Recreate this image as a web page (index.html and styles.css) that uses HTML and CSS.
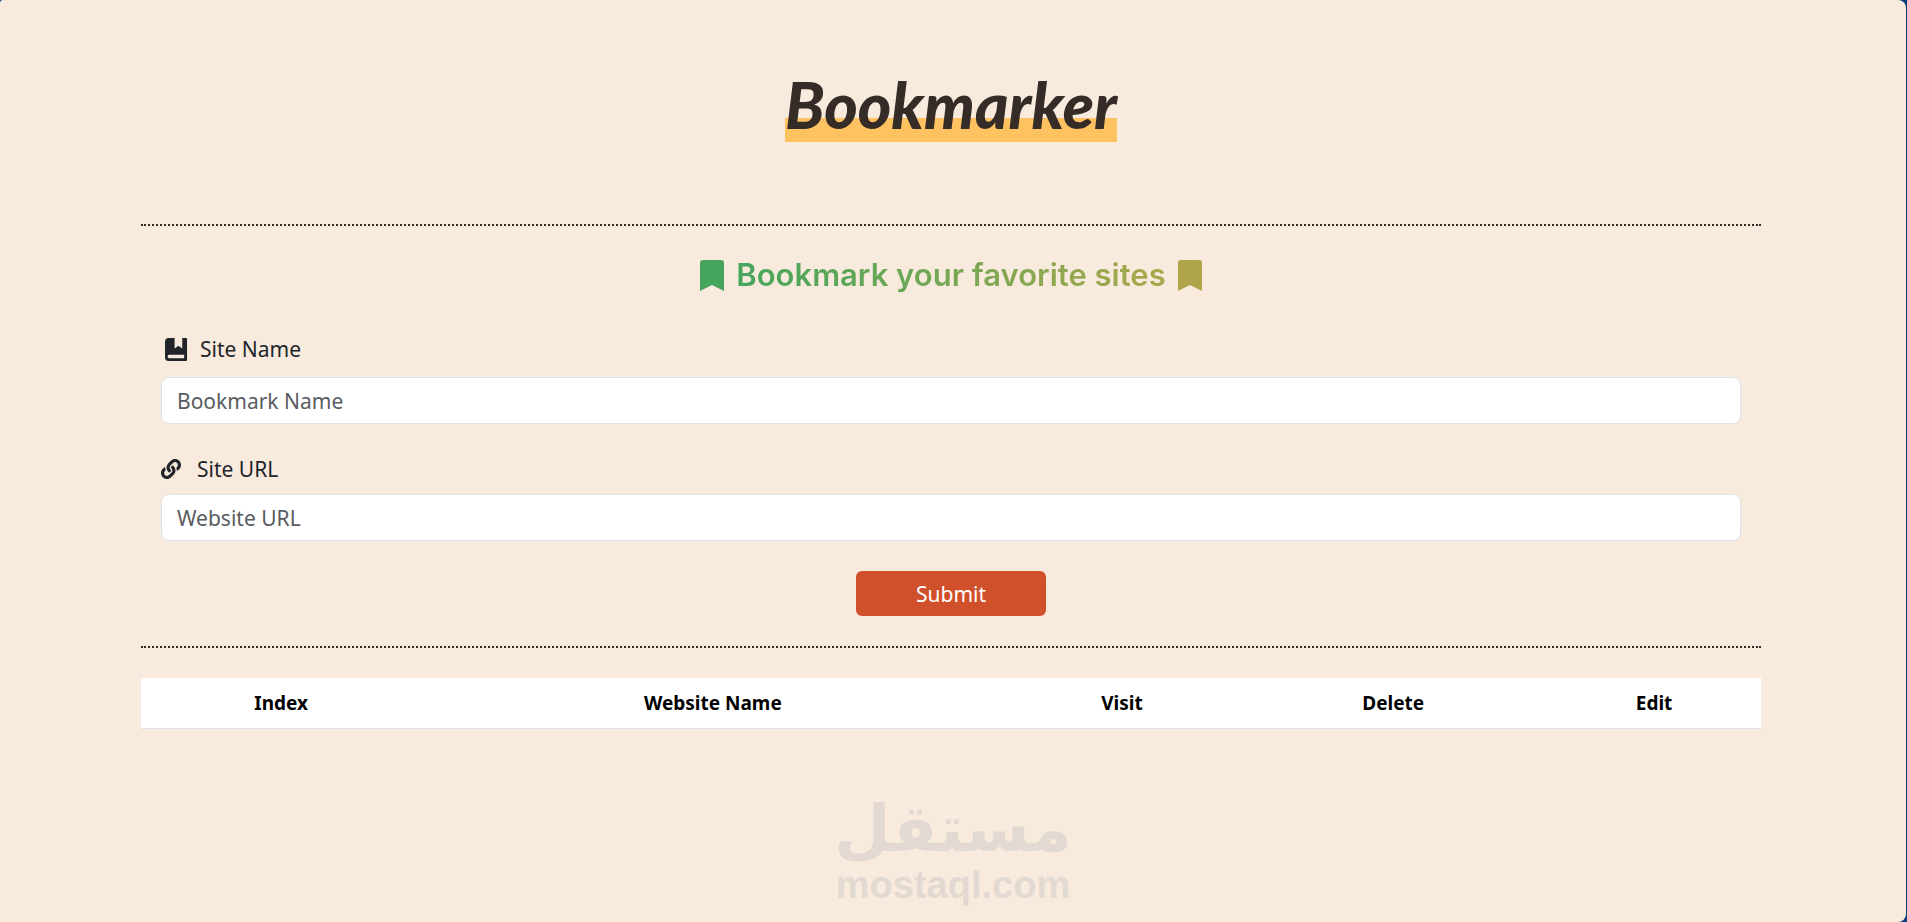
FILE: index.html
```html
<!DOCTYPE html>
<html lang="en">
<head>
<meta charset="utf-8">
<title>Bookmarker</title>
<link rel="stylesheet" href="styles.css">
</head>
<body>
<div class="page">
  <header class="header">
    <h1 class="brand">Bookmarker</h1>
  </header>
  <main class="content">
    <section class="entry">
      <div class="heading">
        <svg class="flag flag-start" viewBox="0 0 24 31" aria-hidden="true"><path d="M3 0h18a3 3 0 0 1 3 3v28l-12-6L0 31V3a3 3 0 0 1 3-3z"/></svg>
        <h2 class="heading-text">Bookmark your favorite sites</h2>
        <svg class="flag flag-end" viewBox="0 0 24 31" aria-hidden="true"><path d="M3 0h18a3 3 0 0 1 3 3v28l-12-6L0 31V3a3 3 0 0 1 3-3z"/></svg>
      </div>
      <form class="form">
        <div class="field field-name">
          <label class="label" for="site-name">
            <svg class="icon-book" viewBox="0 0 24 26" aria-hidden="true"><path fill-rule="evenodd" d="M4 1h6v11l4-3 4 3V1h4a1 1 0 0 1 1 1v22a1 1 0 0 1-1 1H4a4 4 0 0 1-4-4V5a4 4 0 0 1 4-4zM4.500 18.500a1.700 1.700 0 0 0 0 3.500H20v-3.500z"/></svg>
            Site Name
          </label>
          <input class="input" id="site-name" type="text" placeholder="Bookmark Name">
        </div>
        <div class="field">
          <label class="label label-url" for="site-url">
            <svg class="icon-link" viewBox="0 0 512 512" aria-hidden="true"><path d="M326.612 185.391c59.747 59.809 58.927 155.698.36 214.590-.11.12-.24.25-.36.37l-67.200 67.200c-59.270 59.270-155.699 59.262-214.960 0-59.270-59.260-59.270-155.700 0-214.960l37.106-37.106c9.840-9.840 26.786-3.300 27.294 10.606.648 17.722 3.826 35.527 9.690 52.721 1.986 5.822.567 12.262-3.783 16.612l-13.087 13.087c-28.026 28.026-28.905 73.660-1.155 101.960 28.024 28.579 74.086 28.749 102.325.51l67.200-67.190c28.191-28.191 28.073-73.757 0-101.830-3.701-3.694-7.429-6.564-10.341-8.569a16.037 16.037 0 0 1-6.947-12.606c-.396-10.567 3.348-21.456 11.698-29.806l21.054-21.055c5.521-5.521 14.182-6.199 20.584-1.731a152.482 152.482 0 0 1 20.522 17.197zM467.547 44.449c-59.261-59.262-155.690-59.270-214.960 0l-67.200 67.200c-.12.12-.25.25-.36.37-58.566 58.892-59.387 154.781.36 214.590a152.454 152.454 0 0 0 20.521 17.196c6.402 4.468 15.064 3.789 20.584-1.731l21.054-21.055c8.350-8.350 12.094-19.239 11.698-29.806a16.037 16.037 0 0 0-6.947-12.606c-2.912-2.005-6.640-4.875-10.341-8.569-28.073-28.073-28.191-73.639 0-101.830l67.200-67.190c28.239-28.239 74.300-28.069 102.325.51 27.750 28.300 26.872 73.934-1.155 101.960l-13.087 13.087c-4.350 4.350-5.769 10.790-3.783 16.612 5.864 17.194 9.042 34.999 9.690 52.721.509 13.906 17.454 20.446 27.294 10.606l37.106-37.106c59.271-59.259 59.271-155.699.001-214.959z"/></svg>
            Site URL
          </label>
          <input class="input" id="site-url" type="text" placeholder="Website URL">
        </div>
        <button class="submit" type="button">Submit</button>
      </form>
    </section>
    <table class="sites">
      <thead>
        <tr>
          <th class="col-index" scope="col">Index</th>
          <th class="col-name" scope="col">Website Name</th>
          <th class="col-visit" scope="col">Visit</th>
          <th class="col-delete" scope="col">Delete</th>
          <th class="col-edit" scope="col">Edit</th>
        </tr>
      </thead>
    </table>
  </main>
  <footer class="mark">
    <span class="mark-arabic" lang="ar" dir="rtl">مستقل</span>
    <span class="mark-latin">mostaql.com</span>
  </footer>
</div>
</body>
</html>
```
FILE: styles.css
```css
* {
  box-sizing: border-box;
}

body {
  margin: 0;
  background: #0b3e78;
  font-family: "Noto Sans", "Open Sans", sans-serif;
  font-size: 21px;
  line-height: 30px;
  color: #212529;
}

.page {
  min-height: 100vh;
  margin-right: 1px;
  padding-right: 4px;
  border-radius: 3px 8px 8px 0;
  background: #f8ebdd;
}

.header {
  display: flex;
  justify-content: center;
  padding: 64px 0 82px;
}

.brand {
  margin: 0;
  background: linear-gradient(#ffc260, #ffc260) bottom / 100% 24px no-repeat;
  color: #352c28;
  font-family: Lato, sans-serif;
  font-size: 64px;
  font-style: italic;
  font-weight: 900;
  line-height: 82px;
  height: 78px;
}

.content {
  width: 85%;
  min-width: calc(100% - 282px);
  margin: 0 auto;
}

.entry {
  padding: 33px 20px 30px;
  border-top: 2px dotted #352c28;
  border-bottom: 2px dotted #352c28;
}

.heading {
  display: flex;
  align-items: center;
  justify-content: center;
  gap: 12px;
  height: 32px;
}

.heading-text {
  margin: 0;
  background: linear-gradient(90deg, #44a65c, #a9a84c);
  background-clip: text;
  color: transparent;
  font-family: Inter, sans-serif;
  font-size: 31px;
  font-weight: 600;
  line-height: 40px;
}

.flag {
  width: 24px;
  height: 31px;
}

.flag-start {
  fill: #44a65c;
}

.flag-end {
  fill: #b0a44a;
}

.form {
  display: flex;
  flex-direction: column;
  align-items: center;
  gap: 30px;
  margin-top: 43px;
}

.field {
  display: flex;
  flex-direction: column;
  gap: 10px;
  width: 100%;
}

.field-name {
  gap: 13px;
}

.label {
  display: flex;
  align-items: center;
  gap: 12px;
  padding-left: 4px;
}

.label-url {
  gap: 16px;
  padding-left: 0;
}

.icon-book {
  width: 23px;
  height: 25px;
  fill: #212529;
}

.icon-link {
  width: 20px;
  height: 20px;
  fill: #212529;
}

.input {
  width: 100%;
  height: 47px;
  padding: 0 15px;
  border: 1px solid #dee2e6;
  border-radius: 8px;
  background: #fff;
  color: #212529;
  font: inherit;
}

.input::placeholder {
  color: #595c5f;
  opacity: 1;
}

.submit {
  width: 190px;
  height: 45px;
  border: 0;
  border-radius: 6px;
  background: #d1502c;
  color: #fff;
  font: inherit;
}

.sites {
  width: 100%;
  margin-top: 30px;
  border-collapse: collapse;
  table-layout: fixed;
  background: #fff;
  color: #000;
}

.sites th {
  padding: 10px;
  border-bottom: 1px solid #dee2e6;
  font-size: 19px;
  font-weight: 700;
}

.col-index {
  width: 17.3%;
}

.col-name {
  width: 36%;
}

.col-visit {
  width: 14.5%;
}

.col-delete {
  width: 19%;
}

.col-edit {
  width: 13.2%;
}

.mark {
  display: flex;
  flex-direction: column;
  align-items: center;
  padding: 60px 0 8px 4px;
  color: #e2dad2;
  font-weight: 700;
}

.mark-arabic {
  font-family: "DejaVu Sans", sans-serif;
  font-size: 65px;
  line-height: 80px;
}

.mark-latin {
  font-family: "Liberation Sans", Arial, sans-serif;
  font-size: 38px;
  line-height: 32px;
}
```
